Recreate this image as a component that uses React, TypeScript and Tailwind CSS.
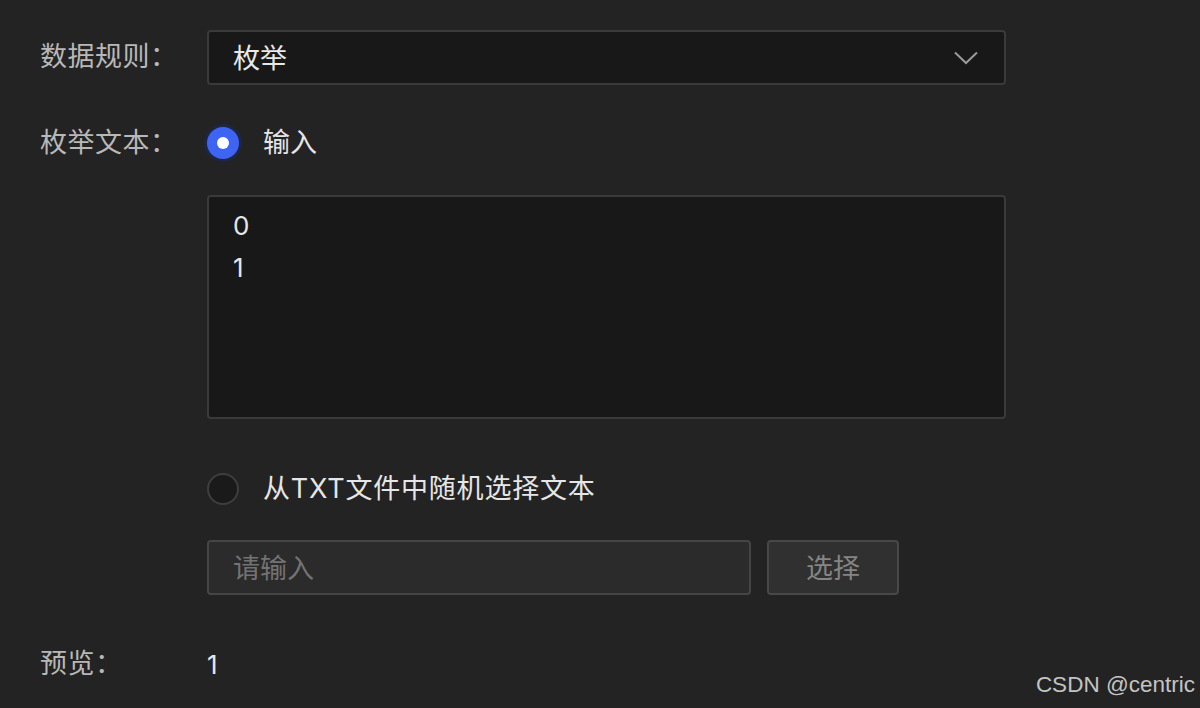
import React from "react";

const cjk = { fontFamily: 'Inter, "Noto Sans CJK SC", "Noto Sans", sans-serif' };

export default function App() {
  return (
    <div
      className="w-[1200px] h-[708px] bg-[#232323] relative overflow-hidden pl-[40px] pt-[30px]"
      style={cjk}
    >
      {/* Row 1 */}
      <div className="flex items-center">
        <div className="w-[167px] text-[27px] text-[#b8b8b8] tracking-[0.5px]">数据规则：</div>
        <div className="w-[799px] h-[55px] rounded-[4px] border-2 border-[#3a3a3a] bg-[#181818] flex items-center justify-between pl-[24px] pr-[26px]">
          <span className="text-[27px] text-[#e8e8e8] pt-[4px]">枚举</span>
          <svg width="24" height="14" viewBox="0 0 24 14" fill="none">
            <path d="M1 1.5 L12 12 L23 1.5" stroke="#9a9a9a" strokeWidth="2" />
          </svg>
        </div>
      </div>

      {/* Row 2 */}
      <div className="flex items-center mt-[42px] h-[32px]">
        <div className="w-[167px] text-[27px] text-[#b8b8b8] tracking-[0.5px]">枚举文本：</div>
        <div className="flex items-center">
          <div className="w-[32px] h-[32px] rounded-full bg-[#3d64f2] flex items-center justify-center ring-[3px] ring-[#1f2644]">
            <div className="w-[12px] h-[12px] rounded-full bg-white" />
          </div>
          <span className="ml-[24px] text-[27px] text-[#e6e6e6]">输入</span>
        </div>
      </div>

      {/* Textarea */}
      <div className="flex mt-[36px]">
        <div className="w-[167px]" />
        <div className="w-[799px] h-[224px] rounded-[4px] border-2 border-[#3a3a3a] bg-[#181818] pl-[24px] pt-[8px] text-[26px] leading-[42px] text-[#e6e6e6]">
          <div>0</div>
          <div>1</div>
        </div>
      </div>

      {/* Radio 2 */}
      <div className="flex items-center mt-[54px] h-[32px]">
        <div className="w-[167px]" />
        <div className="flex items-center">
          <div className="w-[32px] h-[32px] rounded-full bg-[#1a1a1a] border-2 border-[#3e3e3e]" />
          <span className="ml-[24px] text-[27px] text-[#e6e6e6] tracking-[0.8px] pt-[1px]">从TXT文件中随机选择文本</span>
        </div>
      </div>

      {/* Input + button */}
      <div className="flex mt-[35px]">
        <div className="w-[167px]" />
        <div className="w-[544px] h-[55px] rounded-[4px] border-2 border-[#454545] bg-[#2b2b2b] flex items-center pl-[24px] pt-[3px] text-[27px] text-[#737373]">
          请输入
        </div>
        <div className="ml-[16px] w-[132px] h-[55px] rounded-[4px] border-2 border-[#484848] bg-[#303030] flex items-center justify-center pt-[3px] text-[27px] text-[#858585]">
          选择
        </div>
      </div>

      {/* Preview */}
      <div className="flex items-center mt-[53px] h-[32px]">
        <div className="w-[167px] text-[27px] text-[#b8b8b8] tracking-[0.5px]">预览：</div>
        <span className="text-[26px] text-[#e6e6e6] pt-[1px]">1</span>
      </div>

      <div
        className="absolute right-[5px] bottom-[6px] text-[22.5px] text-[#c4c4c4]"
        style={{ fontFamily: '"Liberation Sans", Arial, sans-serif' }}
      >
        CSDN @centric
      </div>
    </div>
  );
}
